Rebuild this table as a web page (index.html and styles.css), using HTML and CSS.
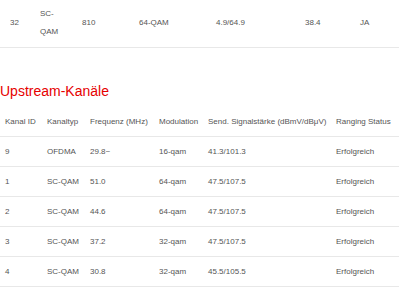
FILE: index.html
```html
<!DOCTYPE html>
<html lang="de">
<head>
<meta charset="utf-8">
<link rel="stylesheet" href="styles.css">
</head>
<body>
<table class="grid down">
  <colgroup>
    <col class="d1"><col class="d2"><col class="d3"><col class="d4"><col class="d5"><col class="d6"><col class="d7">
  </colgroup>
  <tbody>
    <tr><td class="first">32</td><td class="wrap">SC-QAM</td><td>810</td><td>64-QAM</td><td>4.9/64.9</td><td>38.4</td><td>JA</td></tr>
  </tbody>
</table>

<h2 class="title">Upstream-Kanäle</h2>

<table class="grid up">
  <colgroup>
    <col class="u1"><col class="u2"><col class="u3"><col class="u4"><col class="u5"><col class="u6">
  </colgroup>
  <thead>
    <tr><th>Kanal ID</th><th>Kanaltyp</th><th>Frequenz (MHz)</th><th>Modulation</th><th>Send. Signalstärke (dBmV/dBμV)</th><th>Ranging Status</th></tr>
  </thead>
  <tbody>
    <tr><td>9</td><td>OFDMA</td><td>29.8~</td><td>16-qam</td><td>41.3/101.3</td><td>Erfolgreich</td></tr>
    <tr><td>1</td><td>SC-QAM</td><td>51.0</td><td>64-qam</td><td>47.5/107.5</td><td>Erfolgreich</td></tr>
    <tr><td>2</td><td>SC-QAM</td><td>44.6</td><td>64-qam</td><td>47.5/107.5</td><td>Erfolgreich</td></tr>
    <tr><td>3</td><td>SC-QAM</td><td>37.2</td><td>32-qam</td><td>47.5/107.5</td><td>Erfolgreich</td></tr>
    <tr><td>4</td><td>SC-QAM</td><td>30.8</td><td>32-qam</td><td>45.5/105.5</td><td>Erfolgreich</td></tr>
  </tbody>
</table>
</body>
</html>
```

FILE: styles.css
```css
html, body {
  margin: 0;
  padding: 0;
  background: #ffffff;
}

body {
  font-family: "Liberation Sans", Arial, sans-serif;
  font-size: 8px;
  color: #555555;
}

.grid {
  width: 399px;
  border-collapse: collapse;
  table-layout: fixed;
}

.grid th,
.grid td {
  padding: 6px 5px 5px 5px;
  line-height: 18px;
  font-weight: normal;
  text-align: left;
  vertical-align: middle;
  border-bottom: 1px solid #e8e8e8;
  white-space: nowrap;
}

.down td {
  padding-top: 5px;
  padding-bottom: 6px;
}

.down td.first {
  padding-left: 10px;
}

.down td.wrap {
  white-space: normal;
  padding-right: 12px;
}

.d1 { width: 35px; }
.d2 { width: 42px; }
.d3 { width: 57px; }
.d4 { width: 77px; }
.d5 { width: 89px; }
.d6 { width: 55px; }
.d7 { width: 44px; }

.u1 { width: 42px; }
.u2 { width: 43px; }
.u3 { width: 69px; }
.u4 { width: 49px; }
.u5 { width: 128px; }
.u6 { width: 68px; }

.title {
  margin: 35px 0 8px 0;
  font-size: 14px;
  line-height: 16px;
  font-weight: normal;
  color: #e60000;
}
```
